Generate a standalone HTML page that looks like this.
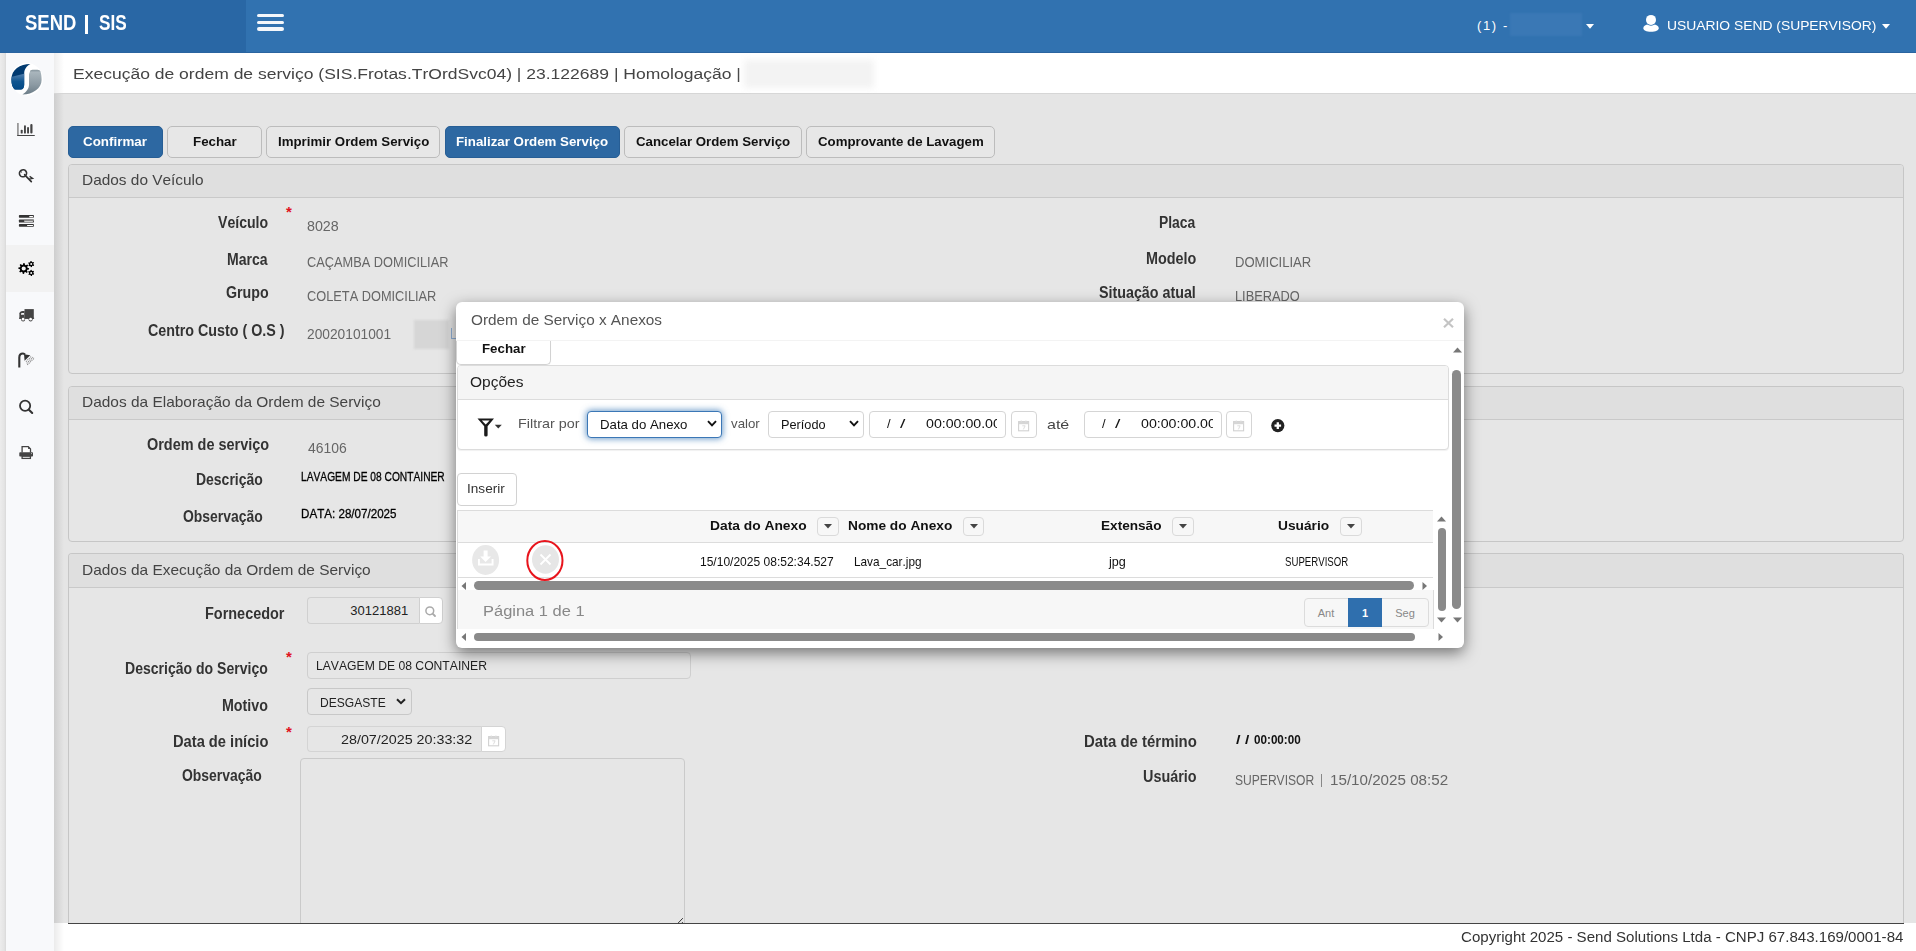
<!DOCTYPE html>
<html><head><meta charset="utf-8"><title>Execução de ordem de serviço</title>
<style>
html,body{margin:0;padding:0;}
body{width:1916px;height:951px;overflow:hidden;position:relative;background:#e5e5e5;font-family:"Liberation Sans", sans-serif;}
.t{position:absolute;white-space:pre;line-height:1;font-kerning:none;}
.r{position:absolute;box-sizing:border-box;}
svg{position:absolute;overflow:visible;}
</style></head><body>
<div class="r" style="left:0px;top:0px;width:1916px;height:53px;background:#3172b0;"></div>
<div class="r" style="left:0px;top:0px;width:246px;height:53px;background:#2967a5;"></div>
<div class="r" style="left:0px;top:52px;width:1916px;height:1px;background:#2a64a0;"></div>
<div class="t" style="top:11.78px;font-size:22px;font-weight:700;color:#fff;left:25px;transform:scaleX(0.84);transform-origin:0 0;">SEND</div>
<div class="r" style="left:84.5px;top:15px;width:3.5px;height:18.700000000000003px;background:#fff;"></div>
<div class="t" style="top:11.78px;font-size:22px;font-weight:700;color:#fff;left:98.5px;transform:scaleX(0.78);transform-origin:0 0;">SIS</div>
<div class="r" style="left:257px;top:13.5px;width:27px;height:3.5px;background:#f4f7fb;border-radius:2px;"></div>
<div class="r" style="left:257px;top:20.5px;width:27px;height:3.5px;background:#f4f7fb;border-radius:2px;"></div>
<div class="r" style="left:257px;top:27px;width:27px;height:3.5px;background:#f4f7fb;border-radius:2px;"></div>
<div class="t" style="top:18.60px;font-size:13px;font-weight:400;color:#fff;letter-spacing:1.6px;left:1477px;">(1) -</div>
<div class="r" style="left:1509.5px;top:12.5px;width:72.0px;height:23.0px;background:#3a78b5;filter:blur(1px);"></div>
<svg style="left:1586px;top:23.5px" width="8" height="5"><path d="M0 0H8L4 4.7Z" fill="#fff"/></svg>
<svg style="left:1882px;top:23.5px" width="8" height="5"><path d="M0 0H8L4 4.7Z" fill="#fff"/></svg>
<svg style="left:1643px;top:15px" width="17" height="18" viewBox="0 0 17 18"><path d="M0.3 13C0.5 10.6 3 9.4 5 9.4Q8 10.6 11 9.4C13 9.4 15.6 10.6 15.8 13C16 15.4 12.5 16.8 8 16.8C3.5 16.8 0.1 15.4 0.3 13Z" fill="#fff"/><circle cx="8" cy="5.1" r="5.6" fill="#3172b0"/><circle cx="8" cy="4.9" r="5" fill="#fff"/></svg>
<div class="t" style="top:19.00px;font-size:13px;font-weight:400;color:#fff;left:1666.9314507451006px;transform:scaleX(1.0654278841450724);transform-origin:0 0;">USUARIO SEND (SUPERVISOR)</div>
<div class="r" style="left:0px;top:53px;width:6px;height:898px;background:linear-gradient(to right,#ececec,#e4e4e4 70%,#d9d9d9);"></div>
<div class="r" style="left:6px;top:53px;width:48px;height:898px;background:#f8f9fb;"></div>
<div class="r" style="left:6px;top:245px;width:48px;height:47px;background:#f2f2f2;"></div>
<div class="r" style="left:54px;top:53px;width:10px;height:898px;background:linear-gradient(to right,rgba(0,0,0,0.10),rgba(0,0,0,0));"></div>
<svg style="left:8px;top:60px" width="38" height="38" viewBox="0 0 38 38">
<defs>
<clipPath id="cpb"><path d="M22.4 4C12 4 3.4 9.5 3.4 19.5C3.4 24 4.5 27.5 6.4 29.2C7 29.6 8 29.6 9 29.6L12.8 29.6C14.8 29.6 16.2 27.5 16.2 24.8L16.2 13.5C16.2 9.5 18.5 6 22.4 4Z"/></clipPath>
<linearGradient id="lgb2" x1="0" y1="0" x2="0" y2="1">
<stop offset="0" stop-color="#5580ad"/><stop offset="0.45" stop-color="#0f5590"/><stop offset="1" stop-color="#014783"/></linearGradient>
<linearGradient id="lgg" x1="0" y1="0" x2="0" y2="1">
<stop offset="0" stop-color="#84939b"/><stop offset="0.1" stop-color="#a9b5bc"/><stop offset="0.6" stop-color="#8c9aa3"/><stop offset="1" stop-color="#6b7c87"/></linearGradient>
</defs>
<circle cx="18.7" cy="19.3" r="16.3" fill="#fff"/>
<g clip-path="url(#cpb)"><rect x="0" y="0" width="38" height="38" fill="#013a70"/><path d="M0 17.8L17 13.6V31H0Z" fill="url(#lgb2)"/></g>
<path d="M22 11.5C22 10.5 23 9.8 24.5 9.8L29.5 9.8C31 9.8 32 10.5 32.5 11.5C33.3 14 33.6 17 33.6 20C33.6 28 25 34.6 14.4 34.6C18.5 32 21 28.5 21 24.5L21 14Z" fill="url(#lgg)"/>
</svg>
<svg style="left:12px;top:115px" width="30" height="30" viewBox="0 0 30 30"><rect x="5" y="8" width="1.8" height="13" fill="#999"/><rect x="5.2" y="19.9" width="17.7" height="1.2" rx="0.5" fill="#444"/><rect x="8.7" y="14.7" width="2" height="3.9" rx="0.9" fill="#444"/><rect x="12" y="10.3" width="1.9" height="8.3" rx="0.9" fill="#444"/><rect x="15.1" y="12.1" width="1.9" height="6.5" rx="0.9" fill="#444"/><rect x="18.3" y="9.1" width="2.2" height="9.5" rx="1" fill="#444"/></svg>
<svg style="left:12px;top:162px" width="30" height="30" viewBox="0 0 30 30"><ellipse cx="11" cy="11.3" rx="3.6" ry="3.4" transform="rotate(-35 11 11.3)" fill="none" stroke="#333" stroke-width="1.7"/><circle cx="12.6" cy="12.6" r="0.8" fill="#333"/><circle cx="9.5" cy="10" r="0.6" fill="#333"/><path d="M13.4 13.6L19.3 19.6" stroke="#333" stroke-width="1.7" stroke-linecap="round"/><path d="M17.6 14.4L20.6 16.4L17 17.1" fill="none" stroke="#333" stroke-width="1.3"/></svg>
<svg style="left:12px;top:206px" width="30" height="30" viewBox="0 0 30 30"><rect x="6.9" y="9.1" width="15" height="2.7" rx="0.7" fill="#333"/><rect x="17.2" y="10.1" width="3.9" height="1.1" rx="0.5" fill="#fff"/><rect x="6.9" y="13.6" width="15" height="3" rx="0.7" fill="#3a3a3a"/><rect x="12.1" y="13.6" width="9.8" height="1.3" fill="#8a8a8a"/><rect x="12.1" y="15" width="9" height="0.8" rx="0.4" fill="#fff"/><rect x="6.9" y="18.1" width="15" height="2.7" rx="0.7" fill="#333"/><rect x="15" y="18.9" width="6.1" height="1.1" rx="0.5" fill="#fff"/></svg>
<svg style="left:12px;top:254px" width="30" height="30" viewBox="0 0 30 30"><path fill-rule="evenodd" d="M15.52 13.73 L17.09 14.18 L17.00 15.53 L15.38 15.78 L14.95 16.65 L15.74 18.09 L14.72 18.98 L13.40 18.01 L12.47 18.32 L12.02 19.89 L10.67 19.80 L10.42 18.18 L9.55 17.75 L8.11 18.54 L7.22 17.52 L8.19 16.20 L7.88 15.27 L6.31 14.82 L6.40 13.47 L8.02 13.22 L8.45 12.35 L7.66 10.91 L8.68 10.02 L10.00 10.99 L10.93 10.68 L11.38 9.11 L12.73 9.20 L12.98 10.82 L13.85 11.25 L15.29 10.46 L16.18 11.48 L15.21 12.80 Z M13.80 14.50 A2.1 2.1 0 1 0 9.60 14.50 A2.1 2.1 0 1 0 13.80 14.50 Z" fill="#000"/><path fill-rule="evenodd" d="M21.39 10.32 L22.17 10.98 L21.72 11.91 L20.71 11.70 L20.10 12.11 L19.92 13.11 L18.89 13.18 L18.57 12.21 L17.92 11.89 L16.95 12.23 L16.37 11.37 L17.06 10.61 L17.01 9.88 L16.23 9.22 L16.68 8.29 L17.69 8.50 L18.30 8.09 L18.48 7.09 L19.51 7.02 L19.83 7.99 L20.48 8.31 L21.45 7.97 L22.03 8.83 L21.34 9.59 Z M20.20 10.10 A1.0 1.0 0 1 0 18.20 10.10 A1.0 1.0 0 1 0 20.20 10.10 Z" fill="#000"/><path fill-rule="evenodd" d="M21.39 19.12 L22.17 19.78 L21.72 20.71 L20.71 20.50 L20.10 20.91 L19.92 21.91 L18.89 21.98 L18.57 21.01 L17.92 20.69 L16.95 21.03 L16.37 20.17 L17.06 19.41 L17.01 18.68 L16.23 18.02 L16.68 17.09 L17.69 17.30 L18.30 16.89 L18.48 15.89 L19.51 15.82 L19.83 16.79 L20.48 17.11 L21.45 16.77 L22.03 17.63 L21.34 18.39 Z M20.20 18.90 A1.0 1.0 0 1 0 18.20 18.90 A1.0 1.0 0 1 0 20.20 18.90 Z" fill="#000"/></svg>
<svg style="left:12px;top:300px" width="30" height="30" viewBox="0 0 30 30"><rect x="12.5" y="9.1" width="9.3" height="9.5" fill="#444"/><path d="M7.4 18.6V13.3C7.4 11.9 9 10.9 10.5 10.9H12.6V18.6Z" fill="#444"/><rect x="7.1" y="17.7" width="15" height="1.2" fill="#444"/><path d="M9 14.8V13.8C9 13.3 9.6 12.9 10.3 12.9H12V14.8Z" fill="#f4f5f7"/><circle cx="11.1" cy="19.5" r="2" fill="#444"/><circle cx="11.1" cy="19.2" r="1.35" fill="#fff"/><circle cx="18.6" cy="19.5" r="2" fill="#444"/><circle cx="18.6" cy="19.2" r="1.35" fill="#fff"/></svg>
<svg style="left:12px;top:346px" width="30" height="30" viewBox="0 0 30 30"><path d="M7.3 21.6V11.5C7.3 9 9 7.5 11 7.5C12 7.5 12.6 8 13 8.6" fill="none" stroke="#333" stroke-width="2.1"/><path d="M12 8.2L18.3 9.2L12.6 14.7Z" fill="#333"/><path d="M14 15.6L19.4 10.4M14.7 17.3L21 11.2M15.3 18.9L22.5 11.8" fill="none" stroke="#888" stroke-width="1.1" stroke-dasharray="1.1 0.9"/></svg>
<svg style="left:12px;top:393px" width="30" height="30" viewBox="0 0 30 30"><circle cx="13.1" cy="12.8" r="5.1" fill="none" stroke="#333" stroke-width="1.8"/><path d="M16.9 16.7L20.2 20" stroke="#333" stroke-width="2.1" stroke-linecap="round"/></svg>
<svg style="left:12px;top:438px" width="30" height="30" viewBox="0 0 30 30"><path d="M10.1 14.5V8.7H16.3L18.5 10.9V14.5" fill="#fff" stroke="#444" stroke-width="1.3"/><path d="M16.1 8.6V11.1H18.6Z" fill="#444"/><rect x="7.3" y="14.2" width="13.7" height="4.4" rx="0.8" fill="#444"/><circle cx="19.5" cy="15.6" r="0.55" fill="#bbb"/><rect x="10.1" y="18.2" width="8.3" height="2.2" fill="#fff" stroke="#444" stroke-width="1.3"/></svg>
<div class="r" style="left:54px;top:53px;width:1862px;height:41px;background:#fff;border-bottom:1px solid #d6d6d6;"></div>
<div class="r" style="left:54px;top:53px;width:10px;height:40px;background:linear-gradient(to right,rgba(0,0,0,0.07),rgba(0,0,0,0));"></div>
<div class="t" style="top:66.08px;font-size:15.5px;font-weight:400;color:#444;left:73.06335267104873px;transform:scaleX(1.1298977456575203);transform-origin:0 0;">Execução de ordem de serviço (SIS.Frotas.TrOrdSvc04) | 23.122689 | Homologação |</div>
<div class="r" style="left:744px;top:60px;width:130px;height:28px;background:#f3f3f3;filter:blur(3px);"></div>
<div class="r" style="left:68px;top:126px;width:95px;height:32px;background:#2d68a2;border:1px solid #275e95;border-radius:5px;"></div>
<div class="t" style="top:134.70px;font-size:13px;font-weight:700;color:#fff;left:83.25105986971357px;transform:scaleX(1.0295140905005449);transform-origin:0 0;">Confirmar</div>
<div class="r" style="left:167px;top:126px;width:95px;height:32px;background:#e7e7e7;border:1px solid #bcbcbc;border-radius:5px;"></div>
<div class="t" style="top:134.70px;font-size:13px;font-weight:700;color:#111;left:192.50870494807575px;transform:scaleX(1.0249142427517504);transform-origin:0 0;">Fechar</div>
<div class="r" style="left:266px;top:126px;width:174px;height:32px;background:#e7e7e7;border:1px solid #bcbcbc;border-radius:5px;"></div>
<div class="t" style="top:134.70px;font-size:13px;font-weight:700;color:#111;left:277.51159802734037px;transform:scaleX(1.021587445259361);transform-origin:0 0;">Imprimir Ordem Serviço</div>
<div class="r" style="left:445px;top:126px;width:175px;height:32px;background:#2d68a2;border:1px solid #275e95;border-radius:5px;"></div>
<div class="t" style="top:134.70px;font-size:13px;font-weight:700;color:#fff;left:456.41123977615155px;transform:scaleX(1.0219994039537732);transform-origin:0 0;">Finalizar Ordem Serviço</div>
<div class="r" style="left:624px;top:126px;width:178px;height:32px;background:#e7e7e7;border:1px solid #bcbcbc;border-radius:5px;"></div>
<div class="t" style="top:134.70px;font-size:13px;font-weight:700;color:#111;left:636.1556905235536px;transform:scaleX(1.0208294942878253);transform-origin:0 0;">Cancelar Ordem Serviço</div>
<div class="r" style="left:806px;top:126px;width:189px;height:32px;background:#e7e7e7;border:1px solid #bcbcbc;border-radius:5px;"></div>
<div class="t" style="top:134.70px;font-size:13px;font-weight:700;color:#111;left:817.9565600882029px;transform:scaleX(1.0191986624180667);transform-origin:0 0;">Comprovante de Lavagem</div>
<div class="r" style="left:68px;top:164px;width:1836px;height:210px;background:#e6e6e6;border:1px solid #c6c6c6;border-radius:4px;"></div>
<div class="r" style="left:69px;top:165px;width:1834px;height:33px;background:#dfdfdf;border-bottom:1px solid #c9c9c9;border-radius:3px 3px 0 0;"></div>
<div class="t" style="top:171.80px;font-size:15px;font-weight:400;color:#444;left:81.53627851442216px;transform:scaleX(1.0270244454219821);transform-origin:0 0;">Dados do Veículo</div>
<div class="r" style="left:68px;top:386px;width:1836px;height:156px;background:#e6e6e6;border:1px solid #c6c6c6;border-radius:4px;"></div>
<div class="r" style="left:69px;top:387px;width:1834px;height:33px;background:#dfdfdf;border-bottom:1px solid #c9c9c9;border-radius:3px 3px 0 0;"></div>
<div class="t" style="top:394.00px;font-size:15px;font-weight:400;color:#444;left:81.53284048471915px;transform:scaleX(1.0298185267044346);transform-origin:0 0;">Dados da Elaboração da Ordem de Serviço</div>
<div class="r" style="left:68px;top:553px;width:1836px;height:377px;background:#e6e6e6;border:1px solid #c6c6c6;border-radius:4px;border-bottom:none;border-radius:4px 4px 0 0;"></div>
<div class="r" style="left:69px;top:554px;width:1834px;height:34px;background:#dfdfdf;border-bottom:1px solid #c9c9c9;border-radius:3px 3px 0 0;"></div>
<div class="t" style="top:562.30px;font-size:15px;font-weight:400;color:#444;left:81.5319086219602px;transform:scaleX(1.030575850089483);transform-origin:0 0;">Dados da Execução da Ordem de Serviço</div>
<div class="t" style="top:214.66px;font-size:16px;font-weight:700;color:#333;left:218.40361613351877px;transform:scaleX(0.8812239221140473);transform-origin:0 0;">Veículo</div>
<div class="t" style="top:204.30px;font-size:15px;font-weight:700;color:#e0141e;left:286px;">*</div>
<div class="t" style="top:218.30px;font-size:15px;font-weight:400;color:#666;left:307.17996802192783px;transform:scaleX(0.9511801431399421);transform-origin:0 0;">8028</div>
<div class="t" style="top:251.56px;font-size:16px;font-weight:700;color:#333;left:227.3616114561767px;transform:scaleX(0.8767425810904069);transform-origin:0 0;">Marca</div>
<div class="t" style="top:254.30px;font-size:15px;font-weight:400;color:#666;left:307.15040541744634px;transform:scaleX(0.8528010929935549);transform-origin:0 0;">CAÇAMBA DOMICILIAR</div>
<div class="t" style="top:285.26px;font-size:16px;font-weight:700;color:#333;left:225.91695935775212px;transform:scaleX(0.888442883425322);transform-origin:0 0;">Grupo</div>
<div class="t" style="top:288.10px;font-size:15px;font-weight:400;color:#666;left:307.1505070202808px;transform:scaleX(0.8526677067082681);transform-origin:0 0;">COLETA DOMICILIAR</div>
<div class="t" style="top:323.36px;font-size:16px;font-weight:700;color:#333;left:148.1136511375948px;transform:scaleX(0.8934839808079246);transform-origin:0 0;">Centro Custo ( O.S )</div>
<div class="t" style="top:325.70px;font-size:15px;font-weight:400;color:#666;left:307.10809670614964px;transform:scaleX(0.9171637189680352);transform-origin:0 0;">20020101001</div>
<div class="r" style="left:414px;top:320px;width:35px;height:29px;background:#d6d6d6;filter:blur(1.2px);"></div>
<div class="r" style="left:451px;top:328px;width:1px;height:11px;background:#8fb0d6;"></div>
<div class="r" style="left:451px;top:338px;width:5px;height:1px;background:#8fb0d6;"></div>
<div class="t" style="top:214.56px;font-size:16px;font-weight:700;color:#333;left:1159.4723412394799px;transform:scaleX(0.8667176740627358);transform-origin:0 0;">Placa</div>
<div class="t" style="top:251.26px;font-size:16px;font-weight:700;color:#333;left:1146.0380431654676px;transform:scaleX(0.8987625899280567);transform-origin:0 0;">Modelo</div>
<div class="t" style="top:253.90px;font-size:15px;font-weight:400;color:#666;left:1234.8274454428756px;transform:scaleX(0.8716633861075442);transform-origin:0 0;">DOMICILIAR</div>
<div class="t" style="top:285.06px;font-size:16px;font-weight:700;color:#333;left:1099.3885827059426px;transform:scaleX(0.8925663328704051);transform-origin:0 0;">Situação atual</div>
<div class="t" style="top:287.80px;font-size:15px;font-weight:400;color:#666;left:1234.849479734417px;transform:scaleX(0.8537561523469747);transform-origin:0 0;">LIBERADO</div>
<div class="t" style="top:436.76px;font-size:16px;font-weight:700;color:#333;left:146.70742210292917px;transform:scaleX(0.9029758431555606);transform-origin:0 0;">Ordem de serviço</div>
<div class="t" style="top:439.90px;font-size:15px;font-weight:400;color:#666;left:307.58035264483624px;transform:scaleX(0.9285642317380356);transform-origin:0 0;">46106</div>
<div class="t" style="top:471.76px;font-size:16px;font-weight:700;color:#333;left:195.76558387298934px;transform:scaleX(0.8730311259661585);transform-origin:0 0;">Descrição</div>
<div class="t" style="top:471.12px;font-size:12.5px;font-weight:400;color:#000;left:300.7614721345952px;transform:scaleX(0.817764318261479);transform-origin:0 0;-webkit-text-stroke:0.3px #000;">LAVAGEM DE 08 CONTAINER</div>
<div class="t" style="top:508.76px;font-size:16px;font-weight:700;color:#333;left:182.82895692786715px;transform:scaleX(0.8701608718214842);transform-origin:0 0;">Observação</div>
<div class="t" style="top:508.32px;font-size:12.5px;font-weight:400;color:#000;left:300.6474331164136px;transform:scaleX(0.928979513135695);transform-origin:0 0;-webkit-text-stroke:0.3px #000;">DATA: 28/07/2025</div>
<div class="t" style="top:605.66px;font-size:16px;font-weight:700;color:#333;left:205.13342043611462px;transform:scaleX(0.9030816363308702);transform-origin:0 0;">Fornecedor</div>
<div class="r" style="left:307px;top:597px;width:112px;height:27px;background:#e6e6e6;border:1px solid #d0d0d0;border-right:none;border-radius:4px 0 0 4px;"></div>
<div class="r" style="left:419px;top:597px;width:24px;height:27px;background:#fff;border:1px solid #d0d0d0;border-radius:0 4px 4px 0;"></div>
<div class="t" style="top:604.00px;font-size:13px;font-weight:400;color:#222;right:1507.8px;text-align:right;">30121881</div>
<svg style="left:424px;top:605px" width="12" height="12" viewBox="0 0 12 12"><circle cx="5.8" cy="5.8" r="3.9" fill="none" stroke="#aaa" stroke-width="1.5"/><path d="M8.6 8.6L11 11" stroke="#aaa" stroke-width="1.8" stroke-linecap="round"/></svg>
<div class="t" style="top:660.96px;font-size:16px;font-weight:700;color:#333;left:125.46092461433977px;transform:scaleX(0.8773843019307266);transform-origin:0 0;">Descrição do Serviço</div>
<div class="t" style="top:649.30px;font-size:15px;font-weight:700;color:#e0141e;left:286px;">*</div>
<div class="r" style="left:307px;top:652px;width:384px;height:27px;background:#e6e6e6;border:1px solid #cfcfcf;border-radius:4px;"></div>
<div class="t" style="top:659.00px;font-size:13px;font-weight:400;color:#222;left:315.6024815983176px;transform:scaleX(0.9354018711747417);transform-origin:0 0;">LAVAGEM DE 08 CONTAINER</div>
<div class="t" style="top:697.56px;font-size:16px;font-weight:700;color:#333;left:222.346732487071px;transform:scaleX(0.8906440996708975);transform-origin:0 0;">Motivo</div>
<div class="r" style="left:307px;top:688px;width:105px;height:27px;background:#e6e6e6;border:1px solid #c8c8c8;border-radius:4px;"></div>
<div class="t" style="top:695.50px;font-size:13px;font-weight:400;color:#222;left:319.6102229971552px;transform:scaleX(0.9281425374662043);transform-origin:0 0;">DESGASTE</div>
<svg style="left:396px;top:698px" width="10" height="7" viewBox="0 0 10 7"><path d="M1 1.2L5 5.2L9 1.2" fill="none" stroke="#222" stroke-width="2"/></svg>
<div class="t" style="top:734.46px;font-size:16px;font-weight:700;color:#333;left:173.2188883799053px;transform:scaleX(0.9166590319132694);transform-origin:0 0;">Data de início</div>
<div class="t" style="top:723.80px;font-size:15px;font-weight:700;color:#e0141e;left:286px;">*</div>
<div class="r" style="left:307px;top:726px;width:175px;height:26px;background:#e6e6e6;border:1px solid #d4d4d4;border-right:none;border-radius:4px 0 0 4px;"></div>
<div class="r" style="left:481px;top:726px;width:25px;height:26px;background:#fff;border:1px solid #d4d4d4;border-radius:0 4px 4px 0;"></div>
<div class="t" style="top:733.40px;font-size:13px;font-weight:400;color:#222;left:341.4806349206349px;transform:scaleX(1.1002686202686203);transform-origin:0 0;">28/07/2025 20:33:32</div>
<svg style="left:488px;top:735px" width="12" height="12" viewBox="0 0 12 12"><rect x="0.6" y="1.6" width="10" height="9.2" fill="none" stroke="#d2d2d2" stroke-width="1.1"/><rect x="0.6" y="1.6" width="10" height="2.6" fill="#d6d6d6"/><rect x="2.6" y="0.6" width="1.4" height="1.6" fill="#dcdcdc"/><rect x="7.2" y="0.6" width="1.4" height="1.6" fill="#dcdcdc"/><path d="M4.3 5.8H7.1L5.4 9.4" fill="none" stroke="#dedede" stroke-width="1"/></svg>
<div class="t" style="top:767.76px;font-size:16px;font-weight:700;color:#333;left:182.42823040996367px;transform:scaleX(0.8712679467220202);transform-origin:0 0;">Observação</div>
<div class="r" style="left:300px;top:758px;width:385px;height:172px;background:#e6e6e6;border:1px solid #cacaca;border-radius:4px;"></div>
<svg style="left:677px;top:917px" width="8" height="7" viewBox="0 0 8 7"><path d="M1.2 6L5.8 1.2M4.9 6L5.8 5.1" stroke="#333" stroke-width="1"/></svg>
<div class="t" style="top:734.26px;font-size:16px;font-weight:700;color:#333;left:1083.8016775884666px;transform:scaleX(0.9327391874180869);transform-origin:0 0;">Data de término</div>
<div class="t" style="top:734.12px;font-size:12.5px;font-weight:700;color:#111;left:1236.1412098298676px;transform:scaleX(1.3008090737240217);transform-origin:0 0;">/</div>
<div class="t" style="top:734.12px;font-size:12.5px;font-weight:700;color:#111;left:1245.3487712665406px;transform:scaleX(1.2388657844990547);transform-origin:0 0;">/</div>
<div class="t" style="top:734.12px;font-size:12.5px;font-weight:700;color:#111;left:1254.3381800074692px;transform:scaleX(0.9341307108178754);transform-origin:0 0;">00:00:00</div>
<div class="t" style="top:769.16px;font-size:16px;font-weight:700;color:#333;left:1143.0365804365401px;transform:scaleX(0.898517919698193);transform-origin:0 0;">Usuário</div>
<div class="t" style="top:771.90px;font-size:15px;font-weight:400;color:#666;left:1234.9514538176875px;transform:scaleX(0.805320846864536);transform-origin:0 0;">SUPERVISOR</div>
<div class="r" style="left:1320.5px;top:774px;width:1.5px;height:13px;background:#888;"></div>
<div class="t" style="top:771.90px;font-size:15px;font-weight:400;color:#666;left:1330.0442970991394px;transform:scaleX(1.011486983317395);transform-origin:0 0;">15/10/2025 08:52</div>
<div class="r" style="left:54px;top:923px;width:1862px;height:28px;background:#fff;"></div>
<div class="r" style="left:54px;top:923px;width:10px;height:28px;background:linear-gradient(to right,rgba(0,0,0,0.08),rgba(0,0,0,0));"></div>
<div class="r" style="left:68px;top:923px;width:1836px;height:1px;background:#444;"></div>
<div class="t" style="top:929.95px;font-size:14px;font-weight:400;color:#333;left:1460.5346155129273px;transform:scaleX(1.07658477302514);transform-origin:0 0;">Copyright 2025 - Send Solutions Ltda - CNPJ 67.843.169/0001-84</div>
<div class="r" style="left:456px;top:302px;width:1008px;height:346px;background:#fff;border-radius:6px;box-shadow:0 5px 15px rgba(0,0,0,0.5);"></div>
<div class="t" style="top:311.85px;font-size:15.3px;font-weight:400;color:#555;left:471.07305535813px;transform:scaleX(1.0031551961119807);transform-origin:0 0;">Ordem de Serviço x Anexos</div>
<svg style="left:1443px;top:318px" width="11" height="10" viewBox="0 0 11 10"><path d="M1 0.8L10 9.2M10 0.8L1 9.2" stroke="#c4c4c4" stroke-width="2.2"/></svg>
<div class="r" style="left:456px;top:340px;width:1008px;height:1px;background:#f3f3f3;"></div>
<div class="r" style="left:456px;top:341px;width:95px;height:24px;background:#fff;border:1px solid #d2d2d2;border-top:none;border-radius:0 0 5px 5px;box-shadow:0 1px 1px rgba(0,0,0,0.05);"></div>
<div class="t" style="top:341.57px;font-size:13.5px;font-weight:700;color:#111;left:481.51079718998164px;transform:scaleX(0.984637661485554);transform-origin:0 0;">Fechar</div>
<div class="r" style="left:457px;top:365px;width:992px;height:85px;background:#fff;border:1px solid #dcdcdc;border-radius:4px;box-shadow:0 1px 1px rgba(0,0,0,0.06);"></div>
<div class="r" style="left:458px;top:366px;width:990px;height:34px;background:#f5f5f5;border-bottom:1px solid #dcdcdc;border-radius:3px 3px 0 0;"></div>
<div class="t" style="top:373.85px;font-size:15.3px;font-weight:400;color:#222;left:469.7647887323944px;transform:scaleX(1.0145628165597596);transform-origin:0 0;">Opções</div>
<svg style="left:477px;top:418px" width="26" height="19" viewBox="0 0 26 19"><path d="M0.5 0.5H17L10.6 8.2V17.3Q10.6 18.5 9 18.5Q7.2 18.5 7.2 17.3V8.2Z" fill="#1a1a1a"/><path d="M4.8 2.4H12.6L8.7 6.6Z" fill="#fff"/><path d="M17.8 6.8H24.8L21.3 10.5Z" fill="#333"/></svg>
<div class="t" style="top:416.57px;font-size:13.5px;font-weight:400;color:#555;left:517.8224299065421px;transform:scaleX(1.063343717549325);transform-origin:0 0;">Filtrar por</div>
<div class="r" style="left:587px;top:411px;width:135px;height:27px;background:#fff;border:1px solid #3b77b6;border-radius:4px;box-shadow:0 0 6px 1px rgba(50,115,180,0.7);"></div>
<div class="t" style="top:417.87px;font-size:13.5px;font-weight:400;color:#111;left:600.4158029334336px;transform:scaleX(0.9790280389453005);transform-origin:0 0;">Data do Anexo</div>
<svg style="left:707px;top:420px" width="10" height="7" viewBox="0 0 10 7"><path d="M1 1.2L5 5.4L9 1.2" fill="none" stroke="#111" stroke-width="1.9"/></svg>
<div class="t" style="top:416.57px;font-size:13.5px;font-weight:400;color:#555;left:730.9546384720328px;transform:scaleX(0.9830731140417361);transform-origin:0 0;">valor</div>
<div class="r" style="left:768px;top:411px;width:96px;height:27px;background:#fff;border:1px solid #d5d5d5;border-radius:4px;"></div>
<div class="t" style="top:417.87px;font-size:13.5px;font-weight:400;color:#111;left:780.9559184853302px;transform:scaleX(0.9428037663331781);transform-origin:0 0;">Período</div>
<svg style="left:849px;top:420px" width="10" height="7" viewBox="0 0 10 7"><path d="M1 1.2L5 5.4L9 1.2" fill="none" stroke="#111" stroke-width="1.9"/></svg>
<div class="r" style="left:869px;top:411px;width:137px;height:27px;background:#fff;border:1px solid #d5d5d5;border-radius:4px;overflow:hidden;"></div>
<div class="t" style="top:417.27px;font-size:13.5px;font-weight:400;color:#111;left:886.6px;transform:scaleX(0.9598125366139486);transform-origin:0 0;">/</div>
<div class="t" style="top:417.27px;font-size:13.5px;font-weight:400;color:#111;left:899.5px;transform:scaleX(1.4397188049209078);transform-origin:0 0;">/</div>
<div style="position:absolute;left:926px;top:412px;width:71px;height:25px;overflow:hidden;"><div class="t" style="left:0;top:5.27px;font-size:13.5px;color:#111;transform:scaleX(1.05);transform-origin:0 0;">00:00:00.000</div></div>
<div class="r" style="left:1011px;top:411px;width:26px;height:27px;background:#fff;border:1px solid #d5d5d5;border-radius:4px;"></div>
<svg style="left:1018px;top:420px" width="12" height="12" viewBox="0 0 12 12"><rect x="0.6" y="1.6" width="10" height="9.2" fill="none" stroke="#d2d2d2" stroke-width="1.1"/><rect x="0.6" y="1.6" width="10" height="2.6" fill="#d6d6d6"/><rect x="2.6" y="0.6" width="1.4" height="1.6" fill="#dcdcdc"/><rect x="7.2" y="0.6" width="1.4" height="1.6" fill="#dcdcdc"/><path d="M4.3 5.8H7.1L5.4 9.4" fill="none" stroke="#dedede" stroke-width="1"/></svg>
<div class="t" style="top:418.07px;font-size:13.5px;font-weight:400;color:#444;left:1047.018733608093px;transform:scaleX(1.1879383317374996);transform-origin:0 0;">até</div>
<div class="r" style="left:1084px;top:411px;width:138px;height:27px;background:#fff;border:1px solid #d5d5d5;border-radius:4px;overflow:hidden;"></div>
<div class="t" style="top:417.27px;font-size:13.5px;font-weight:400;color:#111;left:1101.6px;transform:scaleX(0.9598125366139789);transform-origin:0 0;">/</div>
<div class="t" style="top:417.27px;font-size:13.5px;font-weight:400;color:#111;left:1114.5px;transform:scaleX(1.4397188049209382);transform-origin:0 0;">/</div>
<div style="position:absolute;left:1141px;top:412px;width:72px;height:25px;overflow:hidden;"><div class="t" style="left:0;top:5.27px;font-size:13.5px;color:#111;transform:scaleX(1.05);transform-origin:0 0;">00:00:00.000</div></div>
<div class="r" style="left:1226px;top:411px;width:26px;height:27px;background:#fff;border:1px solid #d5d5d5;border-radius:4px;"></div>
<svg style="left:1233px;top:420px" width="12" height="12" viewBox="0 0 12 12"><rect x="0.6" y="1.6" width="10" height="9.2" fill="none" stroke="#d2d2d2" stroke-width="1.1"/><rect x="0.6" y="1.6" width="10" height="2.6" fill="#d6d6d6"/><rect x="2.6" y="0.6" width="1.4" height="1.6" fill="#dcdcdc"/><rect x="7.2" y="0.6" width="1.4" height="1.6" fill="#dcdcdc"/><path d="M4.3 5.8H7.1L5.4 9.4" fill="none" stroke="#dedede" stroke-width="1"/></svg>
<svg style="left:1271px;top:419px" width="14" height="14" viewBox="0 0 14 14"><circle cx="6.8" cy="6.6" r="6.6" fill="#222"/><path d="M6.8 3.3V9.9M3.5 6.6H10.1" stroke="#fff" stroke-width="2.3"/></svg>
<div class="r" style="left:457px;top:473px;width:60px;height:33px;background:#fff;border:1px solid #d2d2d2;border-radius:4px;"></div>
<div class="t" style="top:481.77px;font-size:13.5px;font-weight:400;color:#333;left:467.2450704225352px;transform:scaleX(1.007288173485357);transform-origin:0 0;">Inserir</div>
<div class="r" style="left:457px;top:510px;width:976px;height:68px;background:#fff;border:1px solid #dcdcdc;border-right:none;"></div>
<div class="r" style="left:458px;top:511px;width:975px;height:32px;background:#f7f7f7;border-bottom:1px solid #dcdcdc;"></div>
<div class="t" style="top:519.47px;font-size:13.5px;font-weight:700;color:#111;left:710.0763826924439px;transform:scaleX(1.0227457398620918);transform-origin:0 0;">Data do Anexo</div>
<div class="r" style="left:817px;top:517px;width:22px;height:19px;background:#f7f7f7;border:1px solid #dadada;border-radius:4px;"></div>
<svg style="left:824.0px;top:524px" width="8" height="5"><path d="M0 0H8L4 4.5Z" fill="#444"/></svg>
<div class="t" style="top:519.47px;font-size:13.5px;font-weight:700;color:#111;left:847.5838147280771px;transform:scaleX(1.014516051310222);transform-origin:0 0;">Nome do Anexo</div>
<div class="r" style="left:963px;top:517px;width:21px;height:19px;background:#f7f7f7;border:1px solid #dadada;border-radius:4px;"></div>
<svg style="left:969.5px;top:524px" width="8" height="5"><path d="M0 0H8L4 4.5Z" fill="#444"/></svg>
<div class="t" style="top:519.47px;font-size:13.5px;font-weight:700;color:#111;left:1101.0906738665767px;transform:scaleX(1.006920746823998);transform-origin:0 0;">Extensão</div>
<div class="r" style="left:1172px;top:517px;width:22px;height:19px;background:#f7f7f7;border:1px solid #dadada;border-radius:4px;"></div>
<svg style="left:1179.0px;top:524px" width="8" height="5"><path d="M0 0H8L4 4.5Z" fill="#444"/></svg>
<div class="t" style="top:519.47px;font-size:13.5px;font-weight:700;color:#111;left:1278.374696847211px;transform:scaleX(1.017898739483217);transform-origin:0 0;">Usuário</div>
<div class="r" style="left:1340px;top:517px;width:22px;height:19px;background:#f7f7f7;border:1px solid #dadada;border-radius:4px;"></div>
<svg style="left:1347.0px;top:524px" width="8" height="5"><path d="M0 0H8L4 4.5Z" fill="#444"/></svg>
<svg style="left:472px;top:545px" width="28" height="31" viewBox="0 0 28 31"><ellipse cx="13.6" cy="15" rx="13.5" ry="15" fill="#e8e8e8"/><path d="M11.6 5.5H15.6V11.5H19L13.6 17L8.2 11.5H11.6Z" fill="#fff"/><path d="M6 14V20.5H21.5V14H19.6V18.5H7.9V14Z" fill="#fff"/></svg>
<svg style="left:532px;top:545px" width="28" height="30" viewBox="0 0 28 30"><ellipse cx="13.5" cy="14.5" rx="13.5" ry="14.2" fill="#e6e6e6"/><path d="M8.5 9.5L18.5 19.5M18.5 9.5L8.5 19.5" stroke="#fff" stroke-width="1.8"/></svg>
<svg style="left:526px;top:540px" width="38" height="42" viewBox="0 0 38 42"><ellipse cx="18.9" cy="20.5" rx="17.6" ry="19.5" fill="none" stroke="#e8141c" stroke-width="2"/></svg>
<div class="t" style="top:555.20px;font-size:13px;font-weight:400;color:#111;left:700.0841460165201px;transform:scaleX(0.9248860740467458);transform-origin:0 0;">15/10/2025 08:52:34.527</div>
<div class="t" style="top:555.20px;font-size:13px;font-weight:400;color:#111;left:853.7326069834603px;transform:scaleX(0.9071524257662346);transform-origin:0 0;">Lava_car.jpg</div>
<div class="t" style="top:555.20px;font-size:13px;font-weight:400;color:#111;left:1109.0074311580536px;transform:scaleX(0.9686446333749211);transform-origin:0 0;">jpg</div>
<div class="t" style="top:554.80px;font-size:13px;font-weight:400;color:#111;left:1285.2624273091158px;transform:scaleX(0.7412314896039685);transform-origin:0 0;">SUPERVISOR</div>
<svg style="left:461px;top:582px" width="6" height="8"><path d="M5 0V8L0.5 4Z" fill="#777"/></svg>
<div class="r" style="left:474px;top:581px;width:940px;height:9px;background:#8a8a8a;border-radius:5px;"></div>
<svg style="left:1422px;top:582px" width="6" height="8"><path d="M0.5 0V8L5 4Z" fill="#777"/></svg>
<div class="r" style="left:457px;top:578px;width:1px;height:51px;background:#dcdcdc;"></div>
<div class="r" style="left:458px;top:590px;width:976px;height:39px;background:#f7f7f7;border-right:1px solid #dcdcdc;"></div>
<div class="t" style="top:603.38px;font-size:15.5px;font-weight:400;color:#888;left:482.8502424830262px;transform:scaleX(1.0615604434571304);transform-origin:0 0;">Página 1 de 1</div>
<div class="r" style="left:1304px;top:598px;width:125px;height:29px;background:#f7f7f7;border:1px solid #dcdcdc;border-radius:4px;"></div>
<div class="r" style="left:1348px;top:598px;width:34px;height:29px;background:#2f6fae;"></div>
<div class="t" style="top:608.19px;font-size:11px;font-weight:400;color:#888;left:1026px;width:600px;text-align:center;">Ant</div>
<div class="t" style="top:608.19px;font-size:11px;font-weight:700;color:#fff;left:1065px;width:600px;text-align:center;">1</div>
<div class="t" style="top:608.19px;font-size:11px;font-weight:400;color:#888;left:1105px;width:600px;text-align:center;">Seg</div>
<svg style="left:461px;top:633px" width="6" height="8"><path d="M5 0V8L0.5 4Z" fill="#777"/></svg>
<div class="r" style="left:474px;top:632.5px;width:941px;height:8.5px;background:#8a8a8a;border-radius:5px;"></div>
<svg style="left:1438px;top:633px" width="6" height="8"><path d="M0.5 0V8L5 4Z" fill="#777"/></svg>
<svg style="left:1437px;top:516px" width="9" height="6"><path d="M0 5.5H9L4.5 0.5Z" fill="#777"/></svg>
<div class="r" style="left:1437.5px;top:528px;width:8.5px;height:83px;background:#8a8a8a;border-radius:5px;"></div>
<svg style="left:1437px;top:617px" width="9" height="6"><path d="M0 0.5H9L4.5 5.5Z" fill="#777"/></svg>
<svg style="left:1452.5px;top:347px" width="9" height="6"><path d="M0 5.5H9L4.5 0.5Z" fill="#777"/></svg>
<div class="r" style="left:1452px;top:369.5px;width:8.5px;height:239.0px;background:#8a8a8a;border-radius:5px;"></div>
<svg style="left:1452.5px;top:617px" width="9" height="6"><path d="M0 0.5H9L4.5 5.5Z" fill="#777"/></svg>
</body></html>
